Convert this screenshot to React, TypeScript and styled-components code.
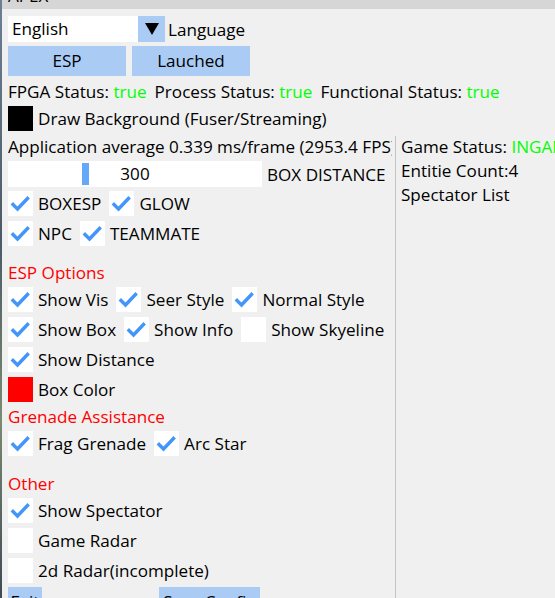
import React from "react";
import styled, { createGlobalStyle } from "styled-components";

const GlobalStyle = createGlobalStyle`
  html, body {
    margin: 0;
    padding: 0;
    background: #f0f0f0;
  }
  body {
    font-family: "Open Sans", "Noto Sans", sans-serif;
    font-size: 17.1px;
    color: #000;
  }
`;

const Screen = styled.div`
  display: flex;
  width: 555px;
  height: 598px;
  overflow: hidden;
`;

const Edge = styled.div`
  width: 2px;
  flex: none;
  background: linear-gradient(#6d7f93, #4b5a66 40%, #7b8a70 70%, #3f4a55);
`;

const Window = styled.div`
  flex: 1;
  display: flex;
  flex-direction: column;
  background: #f0f0f0;
  overflow: hidden;
  min-width: 0;
`;

const TitleBar = styled.div`
  height: 9px;
  flex: none;
  background: #d6d6d6;
  overflow: hidden;
  padding-left: 6px;
`;

const TitleText = styled.div`
  margin-top: -14px;
  line-height: 20px;
  color: #000;
`;

const Body = styled.div`
  display: flex;
  flex-direction: column;
  padding-left: 6px;
`;

const Row = styled.div<{ $top?: number; $h?: number }>`
  display: flex;
  align-items: center;
  gap: 8px;
  margin-top: ${(p) => p.$top ?? 5}px;
  height: ${(p) => p.$h ?? 25}px;
  flex: none;
  white-space: nowrap;
`;

const TextLine = styled.div<{ $top?: number; $color?: string }>`
  margin-top: ${(p) => p.$top ?? 4}px;
  height: 20px;
  line-height: 20px;
  white-space: nowrap;
  color: ${(p) => p.$color ?? "#000"};
  flex: none;
`;

const Green = styled.span`
  color: #00ff00;
`;

const Combo = styled.div`
  display: flex;
  height: 26px;
`;

const ComboValue = styled.div`
  width: 126px;
  background: #fff;
  padding-left: 4px;
  line-height: 26px;
`;

const ComboArrow = styled.div`
  width: 27px;
  background: #aaccf4;
  display: flex;
  align-items: center;
  justify-content: center;
`;

const Button = styled.div<{ $w: number; $offset?: number }>`
  width: ${(p) => p.$w}px;
  height: 30px;
  margin-left: ${(p) => p.$offset ?? 0}px;
  background: #aaccf4;
  text-align: center;
  line-height: 30px;
  flex: none;
`;

const Box = styled.div<{ $fill?: string }>`
  width: 25px;
  height: 25px;
  background: ${(p) => p.$fill ?? "#fff"};
  display: flex;
  align-items: center;
  justify-content: center;
  flex: none;
`;

const CheckItem = styled.div`
  display: flex;
  align-items: center;
  gap: 5px;
`;

const Columns = styled.div`
  display: grid;
  grid-template-columns: 384px 1fr;
  column-gap: 3px;
  margin-top: 5px;
  flex: 1;
`;

const LeftCol = styled.div`
  display: flex;
  flex-direction: column;
  overflow: hidden;
`;

const RightCol = styled.div`
  display: flex;
  flex-direction: column;
  border-left: 1px solid #c4c4c4;
  padding-left: 5px;
  overflow: hidden;
`;

const Slider = styled.div`
  position: relative;
  width: 254px;
  height: 26px;
  background: #fff;
  text-align: center;
  line-height: 26px;
  flex: none;
`;

const SliderGrab = styled.div`
  position: absolute;
  top: 2px;
  width: 7px;
  height: 22px;
  background: #64a8fb;
`;

const Check = ({ on, label }: { on?: boolean; label: string }) => (
  <CheckItem>
    <Box>
      {on && (
        <svg width="25" height="25" viewBox="0 0 25 25">
          <polyline
            points="5,13.5 9.5,18 19.5,7.5"
            fill="none"
            stroke="#4296fa"
            strokeWidth="3.4"
            strokeLinecap="square"
          />
        </svg>
      )}
    </Box>
    <span>{label}</span>
  </CheckItem>
);

export default function App() {
  const sliderMin = 0;
  const sliderMax = 1000;
  const sliderValue = 300;
  const grabPos = ((sliderValue - sliderMin) / (sliderMax - sliderMin)) * 247;

  return (
    <>
      <GlobalStyle />
      <Screen>
        <Edge />
        <Window>
          <TitleBar>
            <TitleText>APEX</TitleText>
          </TitleBar>
          <Body>
            <Row $top={7} $h={26} style={{ gap: 3 }}>
              <Combo>
                <ComboValue>English</ComboValue>
                <ComboArrow>
                  <svg width="14" height="12" viewBox="0 0 14 12">
                    <polygon points="0,0 14,0 7,12" fill="#000" />
                  </svg>
                </ComboArrow>
              </Combo>
              <span>Language</span>
            </Row>
            <Row $top={4} $h={30} style={{ gap: 6 }}>
              <Button $w={118}>ESP</Button>
              <Button $w={118}>Lauched</Button>
            </Row>
            <Row $top={4} $h={22}>
              <span>
                FPGA Status: <Green>true</Green>
              </span>
              <span>
                Process Status: <Green>true</Green>
              </span>
              <span>
                Functional Status: <Green>true</Green>
              </span>
            </Row>
            <Row $top={4}>
              <CheckItem>
                <Box $fill="#000" />
                <span>Draw Background (Fuser/Streaming)</span>
              </CheckItem>
            </Row>
            <Columns>
              <LeftCol>
                <TextLine $top={1}>Application average 0.339 ms/frame (2953.4 FPS)</TextLine>
                <Row $top={4} $h={26} style={{ gap: 5 }}>
                  <Slider>
                    <SliderGrab style={{ left: grabPos }} />
                    {sliderValue}
                  </Slider>
                  <span>BOX DISTANCE</span>
                </Row>
                <Row $top={4}>
                  <Check on label="BOXESP" />
                  <Check on label="GLOW" />
                </Row>
                <Row>
                  <Check on label="NPC" />
                  <Check on label="TEAMMATE" />
                </Row>
                <TextLine $top={17} $color="#ff0000">
                  ESP Options
                </TextLine>
                <Row $top={4}>
                  <Check on label="Show Vis" />
                  <Check on label="Seer Style" />
                  <Check on label="Normal Style" />
                </Row>
                <Row>
                  <Check on label="Show Box" />
                  <Check on label="Show Info" />
                  <Check label="Show Skyeline" />
                </Row>
                <Row>
                  <Check on label="Show Distance" />
                </Row>
                <Row>
                  <CheckItem>
                    <Box $fill="#ff0000" />
                    <span>Box Color</span>
                  </CheckItem>
                </Row>
                <TextLine $top={5} $color="#ff0000">
                  Grenade Assistance
                </TextLine>
                <Row $top={4}>
                  <Check on label="Frag Grenade" />
                  <Check on label="Arc Star" />
                </Row>
                <TextLine $top={18} $color="#ff0000">
                  Other
                </TextLine>
                <Row $top={4}>
                  <Check on label="Show Spectator" />
                </Row>
                <Row>
                  <Check label="Game Radar" />
                </Row>
                <Row>
                  <Check label="2d Radar(incomplete)" />
                </Row>
                <Row $top={4} $h={30} style={{ gap: 0 }}>
                  <Button $w={34}>Exit</Button>
                  <Button $w={101} $offset={117}>
                    Save Config
                  </Button>
                </Row>
              </LeftCol>
              <RightCol>
                <TextLine $top={1}>
                  Game Status: <Green>INGAME</Green>
                </TextLine>
                <TextLine>Entitie Count:4</TextLine>
                <TextLine>Spectator List</TextLine>
              </RightCol>
            </Columns>
          </Body>
        </Window>
      </Screen>
    </>
  );
}
